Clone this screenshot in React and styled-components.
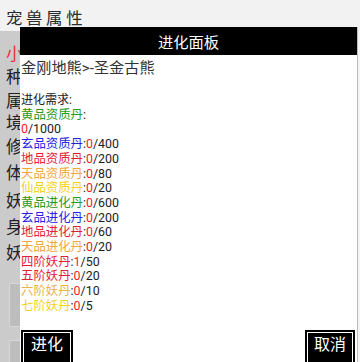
import React from 'react'
import styled, { createGlobalStyle } from 'styled-components'

const GlobalStyle = createGlobalStyle`
  html, body {
    margin: 0;
    padding: 0;
    background: #f2f2f2;
  }
  body {
    font-family: Roboto, "Noto Sans CJK SC", sans-serif;
  }
`

const sideRows = [
    { label: '小', color: '#e8303c', h: 22 },
    { label: '种', h: 24 },
    { label: '属', h: 23 },
    { label: '境', h: 22 },
    { label: '修', h: 25 },
    { label: '体', h: 28 },
    { label: '妖', h: 27 },
    { label: '身', h: 26 },
    { label: '妖', h: 26 },
]

const needs = [
    { name: '黄品资质丹', color: '#1f9a24', have: 0, need: 1000, wrap: true },
    { name: '玄品资质丹', color: '#2323e6', have: 0, need: 400 },
    { name: '地品资质丹', color: '#e31e34', have: 0, need: 200 },
    { name: '天品资质丹', color: '#f2a63a', have: 0, need: 80 },
    { name: '仙品资质丹', color: '#f4d21c', have: 0, need: 20 },
    { name: '黄品进化丹', color: '#1f9a24', have: 0, need: 600 },
    { name: '玄品进化丹', color: '#2323e6', have: 0, need: 200 },
    { name: '地品进化丹', color: '#e31e34', have: 0, need: 60 },
    { name: '天品进化丹', color: '#f2a63a', have: 0, need: 20 },
    { name: '四阶妖丹', color: '#e31e34', have: 1, need: 50 },
    { name: '五阶妖丹', color: '#e31e34', have: 0, need: 20 },
    { name: '六阶妖丹', color: '#eab24a', have: 0, need: 10 },
    { name: '七阶妖丹', color: '#f4d21c', have: 0, need: 5 },
]

export default function App() {
    return (
        <Page>
            <GlobalStyle />
            <Header>宠 兽 属 性</Header>
            <Body>
                <Sidebar>
                    {sideRows.map((r, i) => (
                        <SideRow key={i} h={r.h} color={r.color}>{r.label}</SideRow>
                    ))}
                    <SideBlock />
                    <SideBlock />
                </Sidebar>
                <Main />
            </Body>

            <Dialog>
                <TitleBar>进化面板</TitleBar>
                <BeastName>金刚地熊&gt;-圣金古熊</BeastName>
                <NeedTitle>进化需求:</NeedTitle>
                <NeedList>
                    {needs.map(n => (
                        <NeedLine key={n.name}>
                            <Item color={n.color}>{n.name}</Item>:{n.wrap && <br />}
                            <Have>{n.have}</Have>/{n.need}
                        </NeedLine>
                    ))}
                </NeedList>
                <Buttons>
                    <DarkButton w={52}>进化</DarkButton>
                    <DarkButton w={50}>取消</DarkButton>
                </Buttons>
            </Dialog>
        </Page>
    )
}

const Page = styled.div`
    position: relative;
    width: 360px;
    height: 362px;
    overflow: hidden;
    background: #f2f2f2;
`

const Header = styled.div`
    height: 31px;
    box-sizing: border-box;
    padding: 6px 0 0 6px;
    font-size: 16.4px;
    line-height: 23px;
    color: #2a2a2a;
    font-family: "Noto Sans CJK SC", sans-serif;
`

const Body = styled.div`
    display: flex;
    height: 331px;
`

const Sidebar = styled.div`
    width: 40px;
    background: #cbcbcb;
    padding-top: 11px;
    box-sizing: border-box;
    display: flex;
    flex-direction: column;
`

const SideRow = styled.div`
    height: ${p => p.h}px;
    line-height: ${p => p.h}px;
    padding-left: 6px;
    font-size: 17px;
    color: ${p => p.color || '#222'};
    font-family: "Noto Sans CJK SC", sans-serif;
`

const SideBlock = styled.div`
    flex: none;
    margin: 18px 0 0 9px;
    height: 42px;
    background: #bdbdbd;
    border: 1px solid #d8d8d8;
    border-radius: 2px;

    & + & {
        margin-top: 13px;
    }
`

const Main = styled.div`
    flex: 1;
    background: #f4f4f4;
`

const Dialog = styled.div`
    position: absolute;
    top: 27px;
    left: 20px;
    bottom: -10px;
    width: 337px;
    background: #fff;
    border-right: 1px solid #bdbdbd;
    display: flex;
    flex-direction: column;
`

const TitleBar = styled.div`
    height: 28px;
    line-height: 28px;
    background: #000;
    color: #fff;
    text-align: center;
    font-size: 15.3px;
    font-family: "Noto Sans CJK SC", sans-serif;
`

const BeastName = styled.div`
    margin-top: 2px;
    padding-left: 1px;
    line-height: 22px;
    font-size: 15.2px;
    color: #333;
`

const NeedTitle = styled.div`
    margin-top: 14px;
    padding-left: 1px;
    font-size: 12px;
    line-height: 14.7px;
    color: #222;
`

const NeedList = styled.div`
    padding-left: 1px;
    font-size: 12.4px;
    line-height: 14.7px;
    color: #222;
`

const NeedLine = styled.div``

const Item = styled.span`
    color: ${p => p.color};
`

const Have = styled.span`
    color: #f21c1c;
`

const Buttons = styled.div`
    margin-top: 16px;
    display: flex;
    justify-content: space-between;
    padding: 0 2px 0 1px;
`

const DarkButton = styled.div`
    width: ${p => p.w}px;
    height: 40px;
    box-sizing: border-box;
    background: #000;
    border: 2px solid #000;
    box-shadow: inset 0 0 0 1px #fff;
    color: #fff;
    font-size: 16px;
    line-height: 22px;
    text-align: center;
    font-family: "Noto Sans CJK SC", sans-serif;
`
